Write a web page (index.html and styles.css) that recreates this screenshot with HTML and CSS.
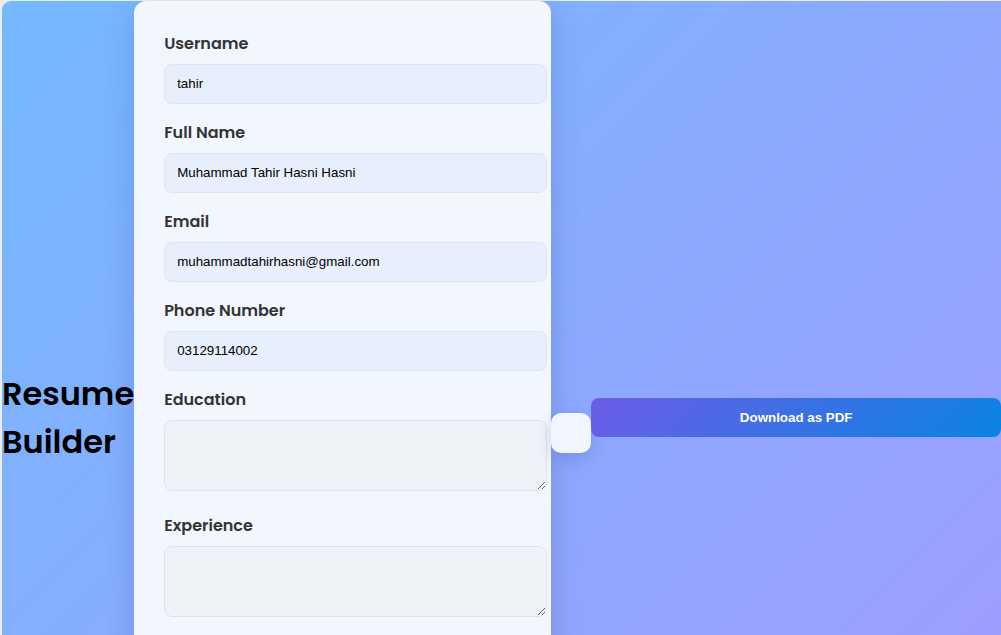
FILE: index.html
```html
<!DOCTYPE html>
<html lang="en">
<head>
<meta charset="UTF-8">
<title>Resume Builder</title>
<link rel="stylesheet" href="styles.css">
</head>
<body>
<div class="page">
  <h1 class="title">Resume Builder</h1>
  <form class="card">
    <label class="label" for="username">Username</label>
    <input class="field" id="username" type="text" value="tahir">
    <label class="label" for="fullname">Full Name</label>
    <input class="field" id="fullname" type="text" value="Muhammad Tahir Hasni Hasni">
    <label class="label" for="email">Email</label>
    <input class="field" id="email" type="email" value="muhammadtahirhasni@gmail.com">
    <label class="label" for="phone">Phone Number</label>
    <input class="field" id="phone" type="tel" value="03129114002">
    <label class="label" for="education">Education</label>
    <textarea class="area" id="education"></textarea>
    <label class="label" for="experience">Experience</label>
    <textarea class="area" id="experience"></textarea>
    <label class="label" for="skills">Skills</label>
    <textarea class="area" id="skills"></textarea>
    <button class="submit" type="button">Generate Resume</button>
  </form>
  <div class="output"></div>
  <button class="download" type="button">Download as PDF</button>
</div>
</body>
</html>
```

FILE: styles.css
```css
html {
  background: #ececec;
}
body {
  margin: 0;
  padding: 1px 0 0 2px;
  overflow: hidden;
}
.page {
  display: flex;
  align-items: center;
  width: 999px;
  border-top-left-radius: 9px;
  background: linear-gradient(135deg, #74b9ff 0%, #a29bfe 100%);
}
.title {
  flex: 0 0 132px;
  margin: 0;
  font-family: "Poppins", Inter, "Open Sans", sans-serif;
  font-size: 32px;
  font-weight: 600;
  line-height: 48px;
  color: #000;
}
.card {
  flex: 0 0 357px;
  padding: 30px 30px 29px;
  background: #f2f6fe;
  border-radius: 12px;
  box-shadow: 0 10px 30px rgba(40, 60, 120, 0.22);
}
.label {
  display: block;
  padding-top: 1px;
  margin: 0 0 8px;
  font-family: "Poppins", Inter, "Open Sans", sans-serif;
  font-size: 16px;
  font-weight: 600;
  line-height: 24px;
  color: #333;
}
.field {
  display: block;
  width: 100%;
  height: 14px;
  padding: 12px;
  margin: 0 0 16px;
  border: 1px solid #dee5f0;
  border-radius: 8px;
  background: #e8effc;
  font-family: "Liberation Sans", Arial, sans-serif;
  font-size: 13.33px;
  line-height: 14px;
  color: #000;
  outline: none;
}
.area {
  display: block;
  width: 100%;
  height: 45px;
  padding: 12px;
  margin: 0 0 22px;
  border: 1px solid #dce2ea;
  border-radius: 8px;
  background: #eff3f8;
  font-family: "Liberation Sans", Arial, sans-serif;
  font-size: 13.33px;
  resize: vertical;
  outline: none;
}
.submit {
  display: block;
  width: 100%;
  height: 40px;
  border: 0;
  border-radius: 8px;
  background: linear-gradient(135deg, #6c5ce7, #0984e3);
  color: #fff;
  font-family: "Liberation Sans", Arial, sans-serif;
  font-size: 13.33px;
  font-weight: bold;
}
.output {
  flex: 0 0 40px;
  height: 40px;
  margin-top: 30px;
  border-radius: 10px;
  background: #f1f5fd;
  box-shadow: 0 6px 16px rgba(40, 60, 120, 0.18);
}
.download {
  flex: 0 0 410px;
  height: 39px;
  border: 0;
  border-radius: 8px;
  background: linear-gradient(135deg, #6c5ce7 0%, #0984e3 100%);
  color: #fff;
  font-family: "Liberation Sans", Arial, sans-serif;
  font-size: 13.33px;
  font-weight: bold;
}
```
